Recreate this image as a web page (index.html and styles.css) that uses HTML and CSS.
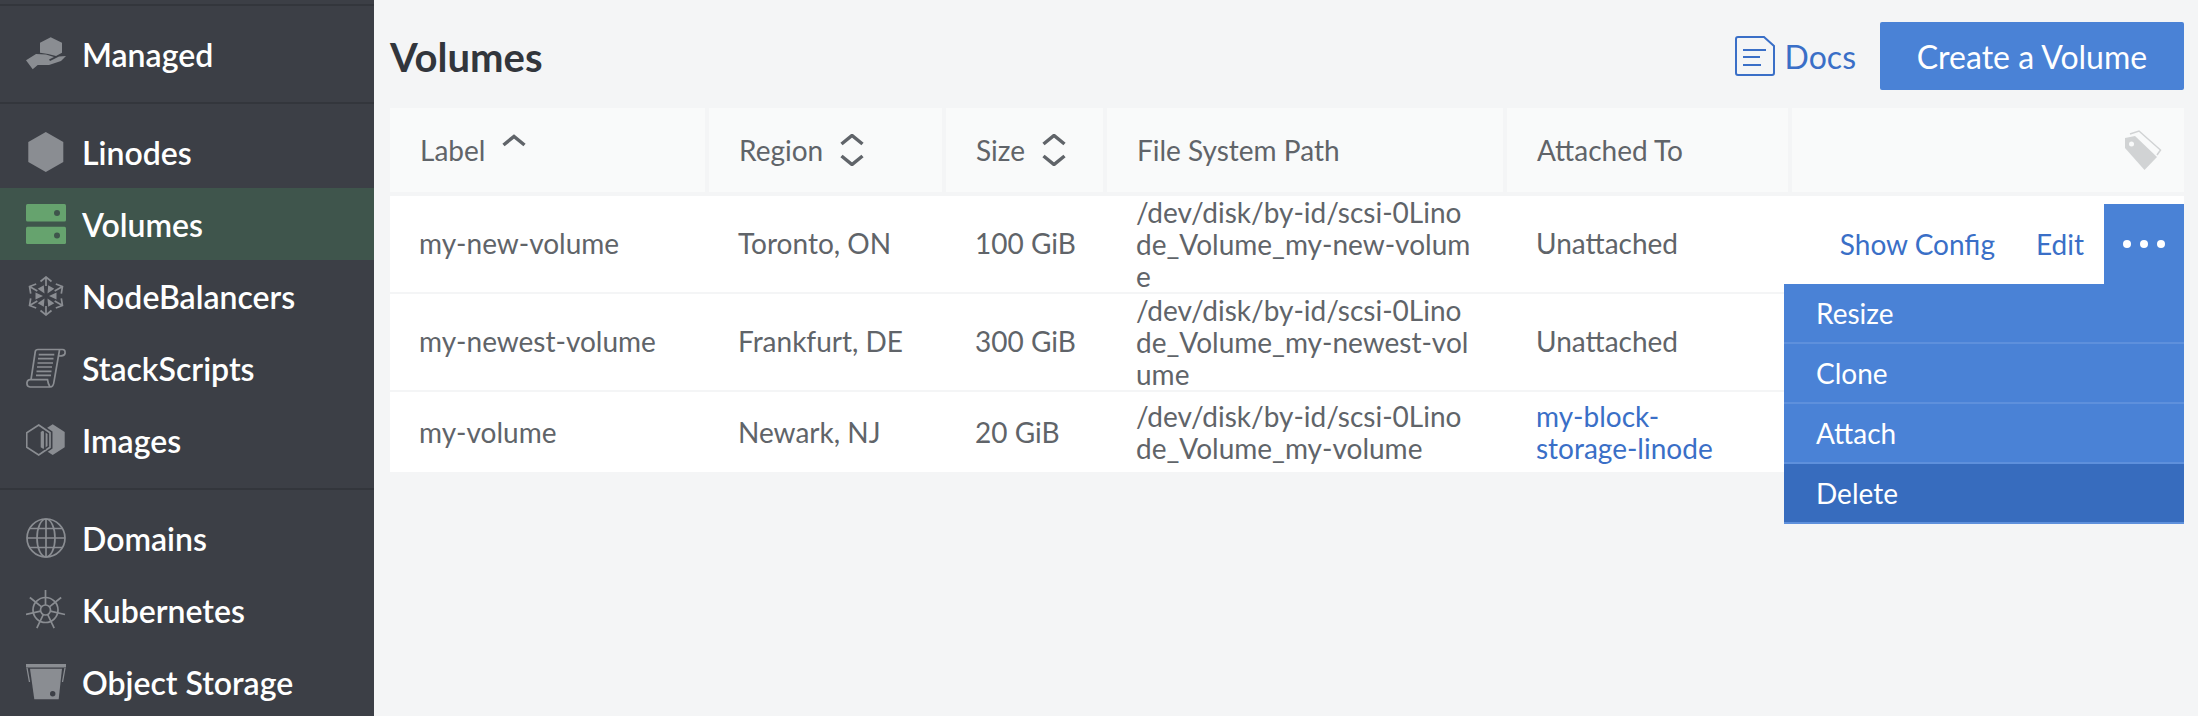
FILE: index.html
```html
<!DOCTYPE html>
<html lang="en">
<head>
    <meta charset="UTF-8">
    <title>Volumes</title>
    <link rel="stylesheet" href="styles.css">
</head>
<body>
    <div class="sidebar">
        <div class="nav-group">
            <a class="nav-item">
                <svg class="nav-icon" viewBox="0 0 40 40"><path d="M24.7 3.3L36 8.7V18.7L30 22 22 20 14 18.7V8.7z"/><path d="M0 26.3L10 20 20 20.5 28 23 23 25.5 24 27 33 22.5 40 22 35 27 23 31H11.7L6.7 35.3z"/></svg>
                <span>Managed</span>
            </a>
        </div>
        <div class="nav-group">
            <a class="nav-item">
                <svg class="nav-icon" viewBox="0 0 40 40"><path d="M19.8 0L37.3 10V30L19.8 40 2.3 30V10z"/></svg>
                <span>Linodes</span>
            </a>
            <a class="nav-item active">
                <svg class="nav-icon" viewBox="0 0 40 40"><rect width="40" height="17.5" rx="1.5"/><rect y="22.7" width="40" height="17.3" rx="1.5"/><circle class="hole" cx="31" cy="9" r="3"/><circle class="hole" cx="31" cy="31.5" r="3"/></svg>
                <span>Volumes</span>
            </a>
            <a class="nav-item">
                <svg class="nav-icon line" viewBox="0 0 40 40">
                    <g id="spoke"><path d="M14.5 5.5L20 1 25.5 5.5M20 1.5V10"/><path class="solid" d="M20 17L16.5 9.5H23.500z" transform="rotate(30 20 20)"/></g>
                    <use href="#spoke" transform="rotate(60 20 20)"/>
                    <use href="#spoke" transform="rotate(120 20 20)"/>
                    <use href="#spoke" transform="rotate(180 20 20)"/>
                    <use href="#spoke" transform="rotate(240 20 20)"/>
                    <use href="#spoke" transform="rotate(300 20 20)"/>
                </svg>
                <span>NodeBalancers</span>
            </a>
            <a class="nav-item">
                <svg class="nav-icon line" viewBox="0 0 40 40"><path d="M5 31.700L9.300 3.500Q9.600 1.500 12 1.500H36.500Q39.500 1.500 39 5.500 38.500 8 33 8M33.500 2L28 33.500Q27.500 39 24 39H4Q.5 38.500 1 34.500 1.500 31.700 4 31.700H21.500Q22 36 24 39"/><path d="M12.700 6.700H28.300M12 10.700H27.500M11.500 15H27M11 19H26M10.500 23.300H25.500M10 27.300H25"/></svg>
                <span>StackScripts</span>
            </a>
            <a class="nav-item">
                <svg class="nav-icon" viewBox="0 0 40 40"><path d="M26.700 4.300L38.700 12V27.300L26.700 35 14.700 27.300V12z"/><path class="cut" d="M12.700 5L24 12.700V27.300L12.700 35 .7 27.300V12.700z"/><path class="edge" d="M12.700 5L24 12.700V27.300L12.700 35 .7 27.300V12.700z"/><path class="cut-thin" d="M18.800 11V30"/></svg>
                <span>Images</span>
            </a>
        </div>
        <div class="nav-group">
            <a class="nav-item">
                <svg class="nav-icon line" viewBox="0 0 40 40"><circle cx="20" cy="20" r="19"/><ellipse cx="20" cy="20" rx="9" ry="19"/><path d="M1 20H39M4 10.500H36M4 29.500H36M20 1V39"/></svg>
                <span>Domains</span>
            </a>
            <a class="nav-item">
                <svg class="nav-icon line" viewBox="0 0 40 40"><circle cx="19.500" cy="20" r="12.500"/><circle cx="19.500" cy="20" r="5"/><g id="wheel-spoke"><path d="M19.500 0V15"/></g><use href="#wheel-spoke" transform="rotate(51.400 19.500 20)"/><use href="#wheel-spoke" transform="rotate(102.900 19.500 20)"/><use href="#wheel-spoke" transform="rotate(154.300 19.500 20)"/><use href="#wheel-spoke" transform="rotate(205.700 19.500 20)"/><use href="#wheel-spoke" transform="rotate(257.100 19.500 20)"/><use href="#wheel-spoke" transform="rotate(308.600 19.500 20)"/></svg>
                <span>Kubernetes</span>
            </a>
            <a class="nav-item">
                <svg class="nav-icon" viewBox="0 0 40 40"><rect y="2" width="40" height="3.500"/><path d="M4 6.700H36L32.700 37.300H8.300z"/><path class="handle" d="M1 6L3.500 20M39 6L36.500 20"/><circle class="hole" cx="26.700" cy="31.700" r="2.700"/></svg>
                <span>Object Storage</span>
            </a>
        </div>
    </div>

    <div class="main">
        <div class="page-header">
            <h1>Volumes</h1>
            <div class="page-actions">
                <a class="docs-link">
                    <svg class="docs-icon" viewBox="0 0 40 40"><path d="M3 1H29L39 10V37Q39 39 37 39H3Q1 39 1 37V3Q1 1 3 1z"/><path d="M8 14H31M8 21H25M8 29H26"/></svg>
                    Docs
                </a>
                <button class="create-button">Create a Volume</button>
            </div>
        </div>

        <table class="volumes">
            <colgroup>
                <col class="col-label"><col class="col-region"><col class="col-size"><col class="col-path"><col class="col-attached"><col>
            </colgroup>
            <thead>
                <tr>
                    <th><span class="sort">Label <svg class="sort-icon" viewBox="0 0 24 32"><path d="M1.500 11L12 2.500 22.500 11"/></svg></span></th>
                    <th><span class="sort">Region <svg class="sort-icon" viewBox="0 0 24 32"><path d="M1.500 10L12 1.500 22.500 10M1.500 22L12 30.500 22.500 22"/></svg></span></th>
                    <th><span class="sort">Size <svg class="sort-icon" viewBox="0 0 24 32"><path d="M1.500 10L12 1.500 22.500 10M1.500 22L12 30.500 22.500 22"/></svg></span></th>
                    <th>File System Path</th>
                    <th>Attached To</th>
                    <th class="tag-head">
                        <svg class="tag-icon" viewBox="0 0 40 40"><path class="tag-fill" d="M1 8L11 6 33 27 20.500 40 1 18z"/><path class="tag-line" d="M6 4L15 1 36.500 20 33 25"/><circle cx="7.500" cy="14" r="2.500" fill="#f9fafa"/></svg>
                    </th>
                </tr>
            </thead>
            <tbody>
                <tr>
                    <td>my-new-volume</td>
                    <td>Toronto, ON</td>
                    <td>100 GiB</td>
                    <td class="path">/dev/disk/by-id/scsi-0Linode_Volume_my-new-volume</td>
                    <td>Unattached</td>
                    <td class="actions-cell">
                        <div class="actions">
                            <a>Show Config</a>
                            <a>Edit</a>
                            <div class="more">
                                <i></i><i></i><i></i>
                                <ul class="menu">
                                    <li>Resize</li>
                                    <li>Clone</li>
                                    <li>Attach</li>
                                    <li class="hover">Delete</li>
                                </ul>
                            </div>
                        </div>
                    </td>
                </tr>
                <tr>
                    <td>my-newest-volume</td>
                    <td>Frankfurt, DE</td>
                    <td>300 GiB</td>
                    <td class="path">/dev/disk/by-id/scsi-0Linode_Volume_my-newest-volume</td>
                    <td>Unattached</td>
                    <td></td>
                </tr>
                <tr>
                    <td>my-volume</td>
                    <td>Newark, NJ</td>
                    <td>20 GiB</td>
                    <td class="path">/dev/disk/by-id/scsi-0Linode_Volume_my-volume</td>
                    <td class="attached"><a>my-block-storage-linode</a></td>
                    <td></td>
                </tr>
            </tbody>
        </table>
    </div>
</body>
</html>
```

FILE: styles.css
```css
body {
    margin: 0;
    height: 100vh;
    display: flex;
    overflow: hidden;
    font-family: Lato, "Open Sans", sans-serif;
    background-color: #f4f5f6;
    color: #606469;
}
.sidebar {
    width: 374px;
    flex-shrink: 0;
    padding-top: 4px;
    box-sizing: border-box;
    background-color: #3c3f46;
    overflow: hidden;
}
.nav-group {
    padding: 12px 0;
    border-top: 2px solid #33363c;
}
.nav-item {
    display: flex;
    align-items: center;
    gap: 16px;
    height: 72px;
    padding-left: 26px;
    color: #fff;
    font-size: 32px;
    font-weight: 600;
}
.nav-item.active {
    background-color: #3f554c;
}
.nav-icon {
    width: 40px;
    height: 40px;
    fill: #8a8d92;
}
.nav-icon .hole {
    fill: #3c3f46;
}
.nav-item.active .nav-icon {
    fill: #66a36e;
}
.nav-item.active .hole {
    fill: #3f554c;
}
.nav-icon.line {
    fill: none;
    stroke: #8a8d92;
    stroke-width: 1.7;
}
.nav-icon .solid {
    fill: #8a8d92;
    stroke: none;
}
.nav-icon .cut {
    fill: none;
    stroke: #3c3f46;
    stroke-width: 5;
}
.nav-icon .edge {
    fill: none;
    stroke: #8a8d92;
    stroke-width: 1.700;
}
.nav-icon .cut-thin {
    stroke: #3c3f46;
    stroke-width: 1.700;
}
.nav-icon .handle {
    fill: none;
    stroke: #8a8d92;
    stroke-width: 1.300;
}
.main {
    flex: 1;
    padding: 22px 14px 0 16px;
}
.page-header {
    display: flex;
    justify-content: space-between;
    align-items: center;
    height: 68px;
    margin-bottom: 18px;
}
h1 {
    margin: 2px 0 0;
    font-size: 40px;
    font-weight: 700;
    color: #32363c;
}
.page-actions {
    display: flex;
    align-items: center;
    gap: 24px;
}
.docs-link {
    display: flex;
    align-items: center;
    gap: 10px;
    color: #3a6fc7;
    font-size: 32px;
}
.docs-icon {
    width: 40px;
    height: 40px;
    fill: none;
    stroke: #3a6fc7;
    stroke-width: 2;
}
.create-button {
    width: 304px;
    height: 68px;
    border: none;
    border-radius: 2px;
    background-color: #4a82d6;
    color: #fff;
    font-family: inherit;
    font-size: 32px;
}
.volumes {
    width: 100%;
    table-layout: fixed;
    border-spacing: 0;
    border-collapse: separate;
    font-size: 28px;
    line-height: 32px;
}
.col-label { width: 319px; }
.col-region { width: 237px; }
.col-size { width: 161px; }
.col-path { width: 400px; }
.col-attached { width: 285px; }
th {
    height: 84px;
    padding: 0 0 0 30px;
    border-right: 4px solid #f4f5f6;
    border-bottom: 4px solid #f4f5f6;
    background-color: #f9fafa;
    font-weight: 400;
    text-align: left;
}
th:last-child {
    border-right: none;
}
.sort {
    display: flex;
    align-items: center;
    gap: 17px;
}
.sort-icon {
    width: 24px;
    height: 32px;
    fill: none;
    stroke: #606469;
    stroke-width: 3.500;
}
.tag-head {
    text-align: right;
    padding-right: 20px;
}
.tag-icon {
    width: 40px;
    height: 40px;
    vertical-align: middle;
}
.tag-fill {
    fill: #d1d3d4;
}
.tag-line {
    fill: none;
    stroke: #d1d3d4;
    stroke-width: 1.500;
}
td {
    height: 78px;
    padding: 0 31px 2px 29px;
    border-bottom: 2px solid #f4f5f6;
    background-color: #fff;
}
tbody tr:last-child td {
    height: 80px;
    padding-bottom: 0;
    border-bottom: none;
}
td.path {
    padding-bottom: 0;
    word-break: break-all;
}
td.attached {
    padding-right: 50px;
}
.attached a {
    color: #3a6fc7;
}
td.actions-cell {
    padding: 8px 0 0;
    vertical-align: top;
}
.actions {
    display: flex;
    justify-content: flex-end;
    align-items: center;
    gap: 41px;
    color: #3a6fc7;
}
.more {
    position: relative;
    display: flex;
    justify-content: center;
    align-items: center;
    gap: 9px;
    width: 80px;
    height: 80px;
    margin-left: -21px;
    background-color: #4a82d6;
}
.more i {
    width: 8px;
    height: 8px;
    border-radius: 50%;
    background-color: #fff;
}
.menu {
    position: absolute;
    top: 100%;
    right: 0;
    width: 400px;
    margin: 0;
    padding: 0;
    list-style: none;
    background-color: #4a82d6;
    color: #fff;
}
.menu li {
    height: 58px;
    padding-left: 32px;
    border-bottom: 2px solid #5e90dc;
    line-height: 58px;
}
.menu li.hover {
    background-color: #376cbe;
}
```
